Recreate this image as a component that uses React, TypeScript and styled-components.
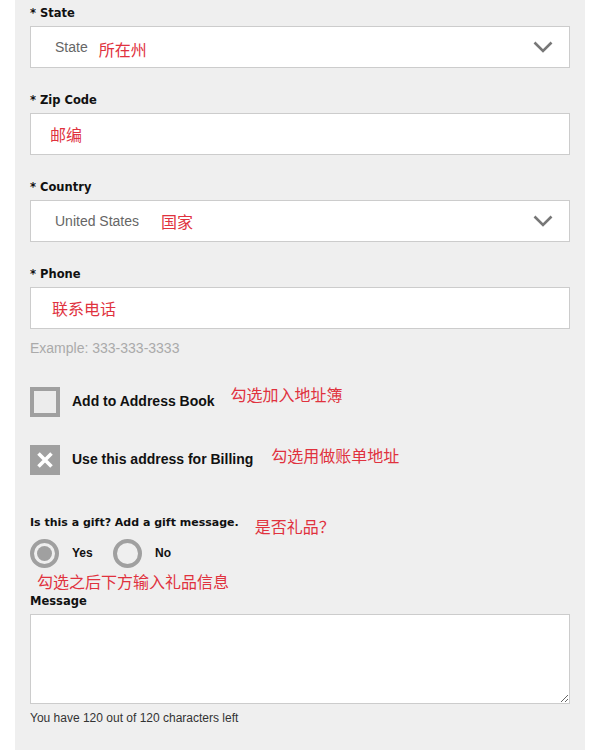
import React from "react";
import styled, { createGlobalStyle } from "styled-components";

const Global = createGlobalStyle`
  html, body { margin: 0; padding: 0; background: #ffffff; }
  body { font-family: "Liberation Sans", Arial, sans-serif; }
`;

const Panel = styled.div`
  margin-left: 15px;
  width: 570px;
  min-height: 750px;
  box-sizing: border-box;
  background: #efefef;
  padding: 6px 15px 0 15px;
  display: flex;
  flex-direction: column;
`;

const Field = styled.div`
  display: flex;
  flex-direction: column;
  margin-bottom: 25px;
`;

const Label = styled.div`
  font-family: "DejaVu Sans", "Liberation Sans", sans-serif;
  font-weight: 700;
  font-size: 11.5px;
  line-height: 14px;
  color: #111;
  margin-bottom: 6px;
`;

const Box = styled.div<{ $pad: number }>`
  height: 42px;
  box-sizing: border-box;
  background: #fff;
  border: 1px solid #cccccc;
  display: flex;
  align-items: center;
  padding: 0 16px 0 ${(p) => p.$pad}px;
`;

const Value = styled.span`
  font-size: 14px;
  color: #666;
`;

const Note = styled.span<{ $gap?: number; $drop?: number }>`
  font-family: "Noto Sans CJK SC", "Microsoft YaHei", sans-serif;
  font-size: 16px;
  line-height: 20px;
  color: #e0323e;
  margin-left: ${(p) => p.$gap ?? 0}px;
  margin-top: ${(p) => p.$drop ?? 0}px;
`;

const Spacer = styled.div`
  flex: 1;
`;

const Hint = styled.div`
  font-size: 14px;
  line-height: 16px;
  color: #aaaaaa;
  margin-top: -14px;
  margin-bottom: 31px;
`;

const CheckRow = styled.div<{ $mb: number }>`
  display: flex;
  align-items: center;
  height: 30px;
  margin-bottom: ${(p) => p.$mb}px;
`;

const CheckBox = styled.div<{ $checked?: boolean }>`
  width: 30px;
  height: 30px;
  box-sizing: border-box;
  border: 4px solid #a0a0a0;
  background: ${(p) => (p.$checked ? "#a0a0a0" : "#ececec")};
  display: flex;
  align-items: center;
  justify-content: center;
  flex-shrink: 0;
`;

const CheckText = styled.span`
  font-weight: 700;
  font-size: 14px;
  color: #111;
  margin-left: 12px;
  margin-top: -3px;
`;

const RaisedNote = styled(Note)<{ $up: number }>`
  align-self: flex-start;
  margin-top: ${(p) => -p.$up}px;
`;

const Question = styled.div`
  display: flex;
  align-items: center;
  height: 16px;
  margin-bottom: 9px;
`;

const QText = styled.span`
  font-family: "DejaVu Sans", "Liberation Sans", sans-serif;
  font-weight: 700;
  font-size: 11px;
  color: #111;
`;

const RadioRow = styled.div`
  display: flex;
  align-items: center;
  height: 28px;
`;

const Radio = styled.div<{ $on?: boolean }>`
  width: 29px;
  height: 29px;
  box-sizing: border-box;
  border-radius: 50%;
  border: 4px solid #a0a0a0;
  background: #efefef;
  display: flex;
  align-items: center;
  justify-content: center;
  flex-shrink: 0;
  &::after {
    content: "";
    width: 15px;
    height: 15px;
    border-radius: 50%;
    background: ${(p) => (p.$on ? "#a0a0a0" : "transparent")};
  }
`;

const RadioText = styled.span`
  font-weight: 700;
  font-size: 12px;
  color: #111;
  margin-left: 13px;
  width: 41px;
`;

const NoteLine = styled.div`
  padding-left: 7px;
  margin-top: 5px;
  height: 18px;
  display: flex;
  align-items: center;
`;

const MsgLabel = styled(Label)`
  margin-top: 4px;
  margin-bottom: 6px;
`;

const TextArea = styled.textarea`
  display: block;
  width: 540px;
  height: 90px;
  box-sizing: border-box;
  border: 1px solid #cccccc;
  background: #fff;
  margin: 0;
  padding: 6px;
  font-family: "Liberation Sans", Arial, sans-serif;
  outline: none;
`;

const Counter = styled.div`
  font-size: 12px;
  color: #333;
  margin-top: 7px;
`;

const Chevron = () => (
  <svg width="20" height="12" viewBox="0 0 20 12">
    <path d="M1.5 1.5 L10 10 L18.5 1.5" fill="none" stroke="#777" strokeWidth="2.6" />
  </svg>
);

const Cross = () => (
  <svg width="18" height="18" viewBox="0 0 18 18">
    <path d="M2.5 2.5 L15.5 15.5 M15.5 2.5 L2.5 15.5" stroke="#fff" strokeWidth="3.6" strokeLinecap="butt" />
  </svg>
);

export default function App() {
  return (
    <>
      <Global />
      <Panel>
        <Field>
          <Label>* State</Label>
          <Box $pad={24}>
            <Value>State</Value>
            <Note $gap={11} $drop={3}>所在州</Note>
            <Spacer />
            <Chevron />
          </Box>
        </Field>
        <Field>
          <Label>* Zip Code</Label>
          <Box $pad={19}>
            <Note>邮编</Note>
          </Box>
        </Field>
        <Field>
          <Label>* Country</Label>
          <Box $pad={24}>
            <Value>United States</Value>
            <Note $gap={22}>国家</Note>
            <Spacer />
            <Chevron />
          </Box>
        </Field>
        <Field>
          <Label>* Phone</Label>
          <Box $pad={21}>
            <Note>联系电话</Note>
          </Box>
        </Field>
        <Hint>Example: 333-333-3333</Hint>

        <CheckRow $mb={28}>
          <CheckBox />
          <CheckText>Add to Address Book</CheckText>
          <RaisedNote $gap={16} $up={3}>勾选加入地址簿</RaisedNote>
        </CheckRow>
        <CheckRow $mb={39}>
          <CheckBox $checked>
            <Cross />
          </CheckBox>
          <CheckText>Use this address for Billing</CheckText>
          <RaisedNote $gap={18} $up={0}>勾选用做账单地址</RaisedNote>
        </CheckRow>

        <Question>
          <QText>Is this a gift? Add a gift message.</QText>
          <Note $gap={16} $drop={8}>是否礼品？</Note>
        </Question>
        <RadioRow>
          <Radio $on />
          <RadioText>Yes</RadioText>
          <Radio />
          <RadioText>No</RadioText>
        </RadioRow>
        <NoteLine>
          <Note>勾选之后下方输入礼品信息</Note>
        </NoteLine>
        <MsgLabel>Message</MsgLabel>
        <TextArea />
        <Counter>You have 120 out of 120 characters left</Counter>
      </Panel>
    </>
  );
}
